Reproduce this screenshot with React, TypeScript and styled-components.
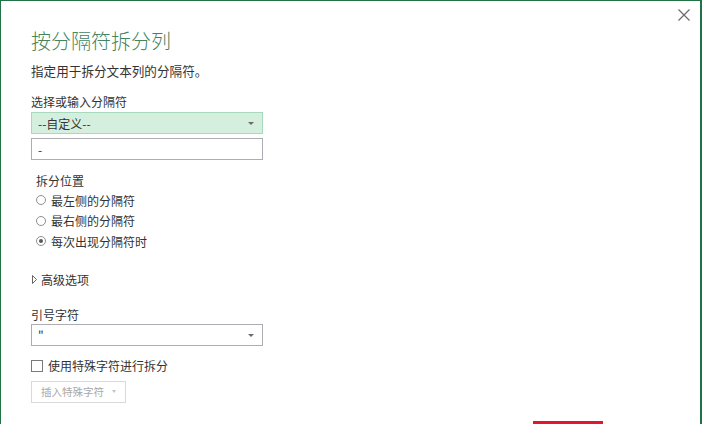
import React from "react";
import styled, { createGlobalStyle } from "styled-components";

const Global = createGlobalStyle`
  html, body { margin: 0; padding: 0; background: #fff; }
  body { font-family: "Noto Sans CJK SC", "Microsoft YaHei", sans-serif; }
  * { box-sizing: border-box; }
`;

const Window = styled.div`
  position: relative;
  width: 702px;
  height: 424px;
  overflow: hidden;
  background: #fff;
  border-top: 1px solid #217346;
  border-left: 1px solid #217346;
  border-right: 2px solid #217346;
`;

const CloseButton = styled.button`
  position: absolute;
  top: 7px;
  right: 9px;
  width: 14px;
  height: 14px;
  padding: 0;
  border: none;
  background: transparent;
  display: flex;
  align-items: center;
  justify-content: center;
`;

const Body = styled.div`
  display: flex;
  flex-direction: column;
  padding: 26px 0 0 30px;
`;

const Title = styled.h1`
  margin: 0;
  font-size: 20px;
  line-height: 28px;
  font-weight: 300;
  color: #45845f;
`;

const Subtitle = styled.p`
  margin: 7px 0 0;
  font-size: 12.6px;
  line-height: 18px;
  color: #333;
`;

const Label = styled.div<{ $mt: number; $indent?: number }>`
  margin-top: ${(p) => p.$mt}px;
  padding-left: ${(p) => p.$indent ?? 0}px;
  font-size: 12px;
  line-height: 16px;
  color: #333;
`;

const Select = styled.div<{ $active?: boolean; $mt: number }>`
  margin-top: ${(p) => p.$mt}px;
  width: 232px;
  height: 22px;
  display: flex;
  align-items: center;
  justify-content: space-between;
  padding: 0 8px 0 6px;
  font-size: 12px;
  color: #333;
  background: ${(p) => (p.$active ? "#d5efdf" : "#fff")};
  border: 1px solid ${(p) => (p.$active ? "#a9d9bc" : "#abadb3")};
`;

const Caret = styled.span`
  width: 0;
  height: 0;
  border-left: 3px solid transparent;
  border-right: 3px solid transparent;
  border-top: 3px solid #6a6a6a;
  margin-top: 1px;
`;

const TextInput = styled.div`
  margin-top: 4px;
  width: 232px;
  height: 22px;
  display: flex;
  align-items: center;
  padding-left: 6px;
  font-size: 12px;
  color: #333;
  border: 1px solid #abadb3;
  background: #fff;
`;

const RadioGroup = styled.div`
  margin-top: 1px;
  padding-left: 5px;
  display: flex;
  flex-direction: column;
`;

const RadioRow = styled.label`
  height: 20.5px;
  display: flex;
  align-items: center;
  gap: 5px;
  font-size: 12px;
  color: #333;
`;

const RadioDot = styled.span<{ $checked?: boolean }>`
  width: 10px;
  height: 10px;
  border-radius: 50%;
  border: 1px solid #8f8f8f;
  background: #fff;
  display: flex;
  align-items: center;
  justify-content: center;
  &::after {
    content: "";
    width: 4px;
    height: 4px;
    border-radius: 50%;
    background: ${(p) => (p.$checked ? "#5a5a5a" : "transparent")};
  }
`;

const Expander = styled.div`
  margin-top: 20px;
  height: 16px;
  display: flex;
  align-items: center;
  gap: 4px;
  font-size: 12px;
  line-height: 16px;
  color: #333;
  padding-left: 1px;
`;

const CheckRow = styled.label`
  margin-top: 12px;
  height: 16px;
  display: flex;
  align-items: center;
  gap: 5px;
  font-size: 12px;
  color: #333;
`;

const CheckBox = styled.span`
  width: 12px;
  height: 12px;
  border: 1px solid #7a7a7a;
  background: #fff;
`;

const DisabledButton = styled.div`
  margin-top: 7px;
  width: 95px;
  height: 22px;
  display: flex;
  align-items: center;
  gap: 8px;
  padding-left: 9px;
  font-size: 10.5px;
  color: #a8a8a8;
  border: 1px solid #d9d9d9;
  background: #fff;
`;

const SmallCaret = styled.span`
  width: 0;
  height: 0;
  border-left: 2.5px solid transparent;
  border-right: 2.5px solid transparent;
  border-top: 3px solid #c4c4c4;
`;

const Footer = styled.div`
  margin-top: 18px;
  display: flex;
  justify-content: flex-end;
  padding-right: 97px;
`;

const PrimaryButton = styled.div`
  width: 70px;
  height: 24px;
  background: #e2172e;
`;

export default function App() {
  return (
    <>
      <Global />
      <Window>
        <CloseButton aria-label="关闭">
          <svg width="12" height="12" viewBox="0 0 12 12">
            <path d="M0.5 0.5 L11.5 11.5 M11.5 0.5 L0.5 11.5" stroke="#6b6b6b" strokeWidth="1.2" />
          </svg>
        </CloseButton>
        <Body>
          <Title>按分隔符拆分列</Title>
          <Subtitle>指定用于拆分文本列的分隔符。</Subtitle>

          <Label $mt={14}>选择或输入分隔符</Label>
          <Select $active $mt={2}>
            <span>--自定义--</span>
            <Caret />
          </Select>
          <TextInput>-</TextInput>

          <Label $mt={13} $indent={5}>拆分位置</Label>
          <RadioGroup>
            <RadioRow>
              <RadioDot />
              最左侧的分隔符
            </RadioRow>
            <RadioRow>
              <RadioDot />
              最右侧的分隔符
            </RadioRow>
            <RadioRow>
              <RadioDot $checked />
              每次出现分隔符时
            </RadioRow>
          </RadioGroup>

          <Expander>
            <svg width="5" height="9" viewBox="0 0 5 9">
              <path d="M0.5 0.5 L4.5 4.5 L0.5 8.5 Z" fill="none" stroke="#555" strokeWidth="0.9" />
            </svg>
            高级选项
          </Expander>

          <Label $mt={19}>引号字符</Label>
          <Select $mt={1}>
            <span>"</span>
            <Caret />
          </Select>

          <CheckRow>
            <CheckBox />
            使用特殊字符进行拆分
          </CheckRow>
          <DisabledButton>
            插入特殊字符
            <SmallCaret />
          </DisabledButton>

          <Footer>
            <PrimaryButton />
          </Footer>
        </Body>
      </Window>
    </>
  );
}
